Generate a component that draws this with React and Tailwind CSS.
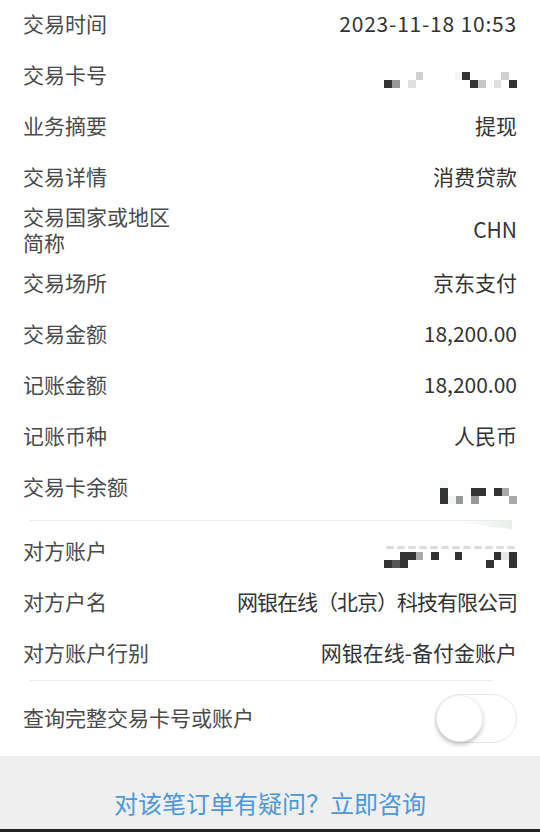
import React from 'react';

const D = '#333333';

// censored blocks, one array per row of cells (null = empty)
const cardNo = [
  [null, null, null, null, '#d0d0d0', null, null, null, null, '#f4f4f4', D, null, null, null, null, '#d0d0d0', null],
  [D, '#999999', null, '#e0e0e0', null, null, null, null, null, null, null, D, '#c8c8c8', null, '#e0e0e0', null, D],
];

const balance = [
  ['#f6f8f7', null, null, null, null, null, null, null, null, null],
  [D, null, null, null, D, D, null, D, '#aaaaaa', null],
  [D, '#f0f4f2', '#999999', null, '#999999', null, null, null, null, '#aaaaaa'],
];

const account = [
  [null, null, D, D, '#aaaaaa', null, D, null, null, D, null, null, null, null, D, '#e8e8e8', D],
  [D, '#555555', D, null, null, null, null, null, null, null, null, null, null, D, null, null, D],
];

function Mosaic({ rows, cell }) {
  return (
    <div className="flex flex-col">
      {rows.map((r, i) => (
        <div key={i} className="flex">
          {r.map((c, j) => (
            <div key={j} className="h-[8px]" style={{ width: cell, backgroundColor: c || 'transparent' }} />
          ))}
        </div>
      ))}
    </div>
  );
}

function Row({ label, children, tall }) {
  return (
    <div className={`flex items-center justify-between px-[23px] pb-[5px] ${tall ? 'h-[55px]' : 'h-[51px]'}`}>
      <div className="w-[160px] text-[21px] leading-[26px] text-[#4a4a4a]">{label}</div>
      <div className="text-[21px] leading-[26px] text-[#333]">{children}</div>
    </div>
  );
}

export default function App() {
  return (
    <div className="w-[540px] h-[832px] bg-white flex flex-col font-['Noto_Sans_CJK_SC','Noto_Sans',sans-serif] overflow-hidden">
      <Row label="交易时间">
        <span className="tracking-[0.8px]">2023-11-18 10:53</span>
      </Row>
      <Row label="交易卡号">
        <div className="mt-[12px]">
          <Mosaic rows={cardNo} cell="7.8px" />
        </div>
      </Row>
      <Row label="业务摘要">提现</Row>
      <Row label="交易详情">消费贷款</Row>
      <Row label="交易国家或地区简称" tall>CHN</Row>
      <Row label="交易场所">京东支付</Row>
      <Row label="交易金额">18,200.00</Row>
      <Row label="记账金额">18,200.00</Row>
      <Row label="记账币种">人民币</Row>
      <Row label="交易卡余额">
        <div className="mt-[12px]">
          <Mosaic rows={balance} cell="7.7px" />
        </div>
      </Row>

      {/* divider with the faint smudge at its right end */}
      <div className="py-[6px] pl-[30px] pr-[28px]">
        <div className="relative h-px bg-[#ececec]">
          <svg className="absolute right-0 top-px" width="56" height="8" viewBox="0 0 56 8">
            <defs>
              <linearGradient id="sm" x1="0" x2="1" y1="0" y2="0">
                <stop offset="0" stopColor="#eef2ef" stopOpacity="0" />
                <stop offset="1" stopColor="#e6eee9" />
              </linearGradient>
            </defs>
            <path d="M0 0 L56 0 L56 8 C40 7 20 4 0 0 Z" fill="url(#sm)" />
          </svg>
        </div>
      </div>

      <Row label="对方账户">
        <div className="mt-[12px] flex flex-col items-end">
          {/* blurred tops of the masked digits */}
          <div className="h-[8px] flex items-start gap-[3px] pr-[2px]">
            {[0, 1, 2, 3, 4, 5, 6, 7, 8, 9, 10, 11].map((i) => (
              <div key={i} className="w-[8px] h-[3px] mt-[2px] rounded-sm bg-[#dcdcdc]" />
            ))}
          </div>
          <Mosaic rows={account} cell="7.8px" />
        </div>
      </Row>
      <Row label="对方户名">
        <span className="tracking-[-1px]">网银在线（北京）科技有限公司</span>
      </Row>
      <Row label="对方账户行别">网银在线-备付金账户</Row>

      <div className="pl-[30px] pr-[47px]">
        <div className="h-px bg-[#ececec]" />
      </div>

      <div className="h-[75px] flex items-center justify-between pl-[23px] pr-[23px]">
        <span className="text-[21px] leading-[26px] text-[#4a4a4a] pb-[3px]">查询完整交易卡号或账户</span>
        <div className="w-[82px] h-[49px] rounded-full border border-[#e6e6e6] bg-white flex items-center">
          <div className="w-[47px] h-[47px] rounded-full bg-white border border-[#eeeeee] shadow-[0_3px_4px_rgba(0,0,0,0.22)]" />
        </div>
      </div>

      <div className="h-[73px] bg-[#efefef] pt-[31px] text-center">
        <span className="text-[24px] leading-[32px] text-[#4a98dc]">对该笔订单有疑问？立即咨询</span>
      </div>
      <div className="h-[3px] bg-[#222]" />
    </div>
  );
}
